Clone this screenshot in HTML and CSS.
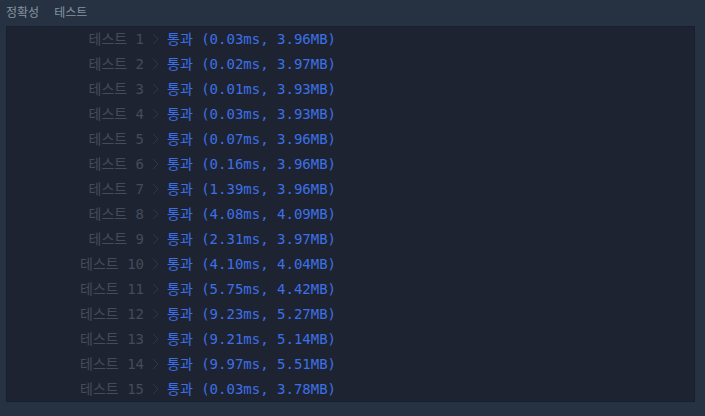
FILE: index.html
```html
<!DOCTYPE html>
<html lang="ko">
<head>
<meta charset="utf-8">
<link rel="stylesheet" href="styles.css">
</head>
<body>
<div class="tabs"><span class="tab">정확성</span><span class="tab">테스트</span></div>
<div class="panel">
  <div class="row"><span class="label">테스트 1</span><svg class="chev" width="7" height="12" viewBox="0 0 7 12"><polyline points="1,1 6,6 1,11"/></svg><span class="res">통과 (0.03ms, 3.96MB)</span></div>
  <div class="row"><span class="label">테스트 2</span><svg class="chev" width="7" height="12" viewBox="0 0 7 12"><polyline points="1,1 6,6 1,11"/></svg><span class="res">통과 (0.02ms, 3.97MB)</span></div>
  <div class="row"><span class="label">테스트 3</span><svg class="chev" width="7" height="12" viewBox="0 0 7 12"><polyline points="1,1 6,6 1,11"/></svg><span class="res">통과 (0.01ms, 3.93MB)</span></div>
  <div class="row"><span class="label">테스트 4</span><svg class="chev" width="7" height="12" viewBox="0 0 7 12"><polyline points="1,1 6,6 1,11"/></svg><span class="res">통과 (0.03ms, 3.93MB)</span></div>
  <div class="row"><span class="label">테스트 5</span><svg class="chev" width="7" height="12" viewBox="0 0 7 12"><polyline points="1,1 6,6 1,11"/></svg><span class="res">통과 (0.07ms, 3.96MB)</span></div>
  <div class="row"><span class="label">테스트 6</span><svg class="chev" width="7" height="12" viewBox="0 0 7 12"><polyline points="1,1 6,6 1,11"/></svg><span class="res">통과 (0.16ms, 3.96MB)</span></div>
  <div class="row"><span class="label">테스트 7</span><svg class="chev" width="7" height="12" viewBox="0 0 7 12"><polyline points="1,1 6,6 1,11"/></svg><span class="res">통과 (1.39ms, 3.96MB)</span></div>
  <div class="row"><span class="label">테스트 8</span><svg class="chev" width="7" height="12" viewBox="0 0 7 12"><polyline points="1,1 6,6 1,11"/></svg><span class="res">통과 (4.08ms, 4.09MB)</span></div>
  <div class="row"><span class="label">테스트 9</span><svg class="chev" width="7" height="12" viewBox="0 0 7 12"><polyline points="1,1 6,6 1,11"/></svg><span class="res">통과 (2.31ms, 3.97MB)</span></div>
  <div class="row"><span class="label">테스트 10</span><svg class="chev" width="7" height="12" viewBox="0 0 7 12"><polyline points="1,1 6,6 1,11"/></svg><span class="res">통과 (4.10ms, 4.04MB)</span></div>
  <div class="row"><span class="label">테스트 11</span><svg class="chev" width="7" height="12" viewBox="0 0 7 12"><polyline points="1,1 6,6 1,11"/></svg><span class="res">통과 (5.75ms, 4.42MB)</span></div>
  <div class="row"><span class="label">테스트 12</span><svg class="chev" width="7" height="12" viewBox="0 0 7 12"><polyline points="1,1 6,6 1,11"/></svg><span class="res">통과 (9.23ms, 5.27MB)</span></div>
  <div class="row"><span class="label">테스트 13</span><svg class="chev" width="7" height="12" viewBox="0 0 7 12"><polyline points="1,1 6,6 1,11"/></svg><span class="res">통과 (9.21ms, 5.14MB)</span></div>
  <div class="row"><span class="label">테스트 14</span><svg class="chev" width="7" height="12" viewBox="0 0 7 12"><polyline points="1,1 6,6 1,11"/></svg><span class="res">통과 (9.97ms, 5.51MB)</span></div>
  <div class="row"><span class="label">테스트 15</span><svg class="chev" width="7" height="12" viewBox="0 0 7 12"><polyline points="1,1 6,6 1,11"/></svg><span class="res">통과 (0.03ms, 3.78MB)</span></div>
</div>
</body>
</html>
```
FILE: styles.css
```css
html, body { margin: 0; padding: 0; }
body {
  background: #263241;
  width: 705px;
  height: 416px;
  overflow: hidden;
  font-family: "DejaVu Sans Mono", "Noto Sans CJK KR", monospace;
}
.tabs {
  height: 26px;
  display: flex;
  align-items: center;
  gap: 15px;
  padding: 0 0 2px 6px;
  font-family: "Noto Sans CJK KR", sans-serif;
  font-size: 12px;
  color: #8592a2;
  line-height: 1;
  box-sizing: border-box;
}
.panel {
  margin: 0 10px 0 6px;
  background: #1e2332;
  border: 1px solid #172030;
  height: 376px;
  box-sizing: border-box;
}
.row {
  height: 25px;
  display: flex;
  align-items: center;
  font-size: 14px;
  line-height: 14px;
  white-space: nowrap;
  padding-bottom: 1px;
  box-sizing: border-box;
}
.label {
  width: 137px;
  text-align: right;
  color: #434c5b;
}
.chev {
  margin: 0 8px 0 8px;
  fill: none;
  stroke: #2f3746;
  stroke-width: 1;
}
.res {
  color: #3d70e6;
}
```
